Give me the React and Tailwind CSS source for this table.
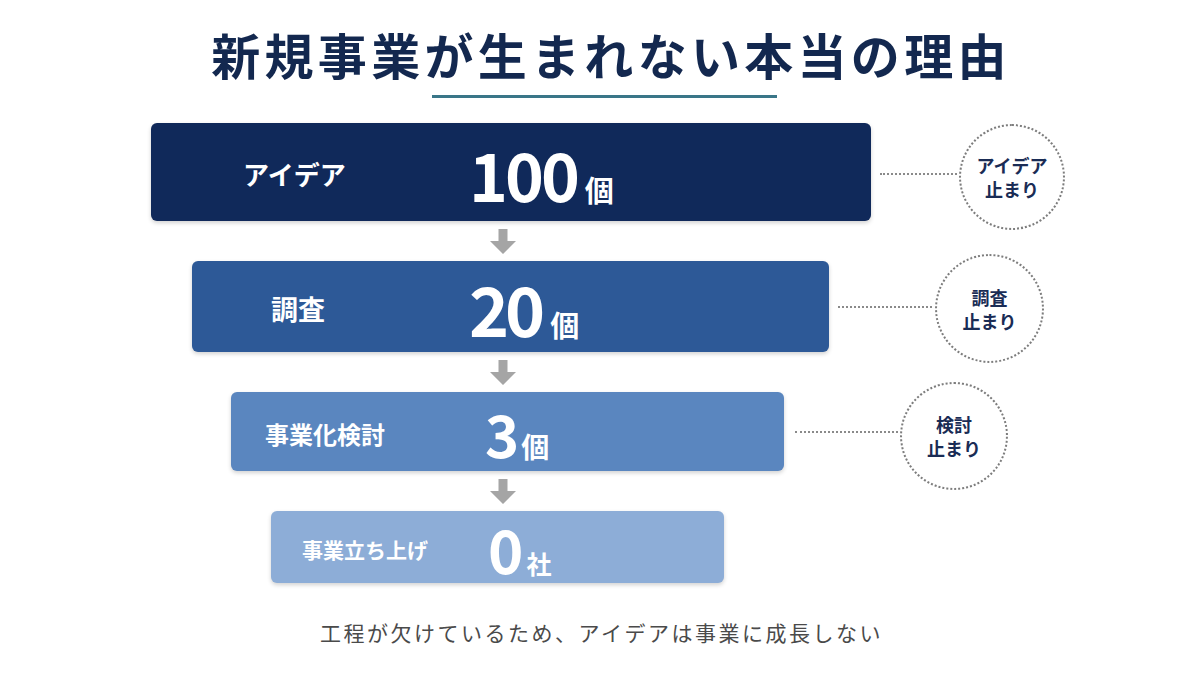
import React from 'react';

const rows = [
  {
    label: 'アイデア',
    num: '100',
    unit: '個',
    pad: 'pl-0',
    box: 'w-[720px] h-[98px] bg-[#10295a]',
    labelCls: 'pl-[92px] w-[318px] text-[26px]',
    numCls: 'text-[66px] tracking-[-3px]',
    unitCls: 'text-[29px] ml-[8px]',
    note: ['アイデア', '止まり'],
    lineCls: 'ml-[9px] w-[77px] translate-y-[2px]',
    circleCls: 'ml-[2px] w-[106px] h-[106px] -my-[4px] translate-y-[5px]',
  },
  {
    label: '調査',
    num: '20',
    unit: '個',
    pad: 'pl-[41px]',
    box: 'w-[637px] h-[91px] bg-[#2d5997]',
    labelCls: 'pl-[79px] w-[277px] text-[27px]',
    numCls: 'text-[68px] tracking-[-4px]',
    unitCls: 'text-[29px] ml-[9px]',
    note: ['調査', '止まり'],
    lineCls: 'ml-[9px] w-[94px]',
    circleCls: 'ml-[3px] w-[109px] h-[109px] -my-[9px] translate-y-[2px]',
  },
  {
    label: '事業化検討',
    num: '3',
    unit: '個',
    pad: 'pl-[80px]',
    box: 'w-[553px] h-[79px] bg-[#5a86bf]',
    labelCls: 'pl-[34px] w-[254px] text-[24px]',
    numCls: 'text-[58px]',
    unitCls: 'text-[28px] ml-[2px]',
    note: ['検討', '止まり'],
    lineCls: 'ml-[11px] w-[103px]',
    circleCls: 'ml-[2px] w-[108px] h-[108px] -my-[15px] translate-y-[4px]',
  },
  {
    label: '事業立ち上げ',
    num: '0',
    unit: '社',
    pad: 'pl-[120px]',
    box: 'w-[453px] h-[72px] bg-[#8dadd7]',
    labelCls: 'pl-[31px] w-[217px] text-[21px]',
    numCls: 'text-[60px]',
    unitCls: 'text-[25px] ml-[3px]',
    note: null,
  },
];

function Arrow() {
  return (
    <div className="h-[40px] flex items-center pl-[339px]">
      <svg width="26" height="25" viewBox="0 0 26 25">
        <path d="M8.5 0h9v12h8.5L13 25 0 12h8.5z" fill="#a5a5a5" />
      </svg>
    </div>
  );
}

export default function App() {
  return (
    <div className="w-[1200px] h-[675px] bg-white flex flex-col font-['Noto_Sans_CJK_JP',sans-serif] overflow-hidden">
      <h1 className="pt-[24px] pl-[22px] text-center text-[49px] leading-[60px] font-bold tracking-[4.3px] text-[#13284f]">
        新規事業が生まれない本当の理由
      </h1>
      <div className="ml-[432px] mt-[11px] w-[345px] h-[3px] bg-[#3a7688]" />

      <div className="ml-[151px] mt-[25px] flex flex-col">
        {rows.map((r, i) => (
          <React.Fragment key={i}>
            {i > 0 && <Arrow />}
            <div className={`flex items-center ${r.pad}`}>
              <div className={`flex items-center rounded-[6px] shadow-[0_2px_4px_rgba(0,0,0,0.18)] text-white ${r.box}`}>
                <div className={`flex-none font-bold leading-none translate-y-[2px] ${r.labelCls}`}>{r.label}</div>
                <div className="flex items-baseline font-bold leading-none translate-y-[1px]">
                  <span className={r.numCls}>{r.num}</span>
                  <span className={r.unitCls}>{r.unit}</span>
                </div>
              </div>
              {r.note && (
                <>
                  <div className={`flex-none border-t-2 border-dotted border-[#8a8a8a] ${r.lineCls}`} />
                  <div className={`flex-none rounded-full border-2 border-dotted border-[#7d7d7d] flex flex-col items-center justify-center text-[18px] font-bold leading-[24px] text-[#1a2c55] ${r.circleCls}`}>
                    <span>{r.note[0]}</span>
                    <span>{r.note[1]}</span>
                  </div>
                </>
              )}
            </div>
          </React.Fragment>
        ))}
      </div>

      <p className="mt-[35px] pl-[3px] text-center text-[21px] leading-[28px] tracking-[2.5px] text-[#4a4a4a]">
        工程が欠けているため、アイデアは事業に成長しない
      </p>
    </div>
  );
}
